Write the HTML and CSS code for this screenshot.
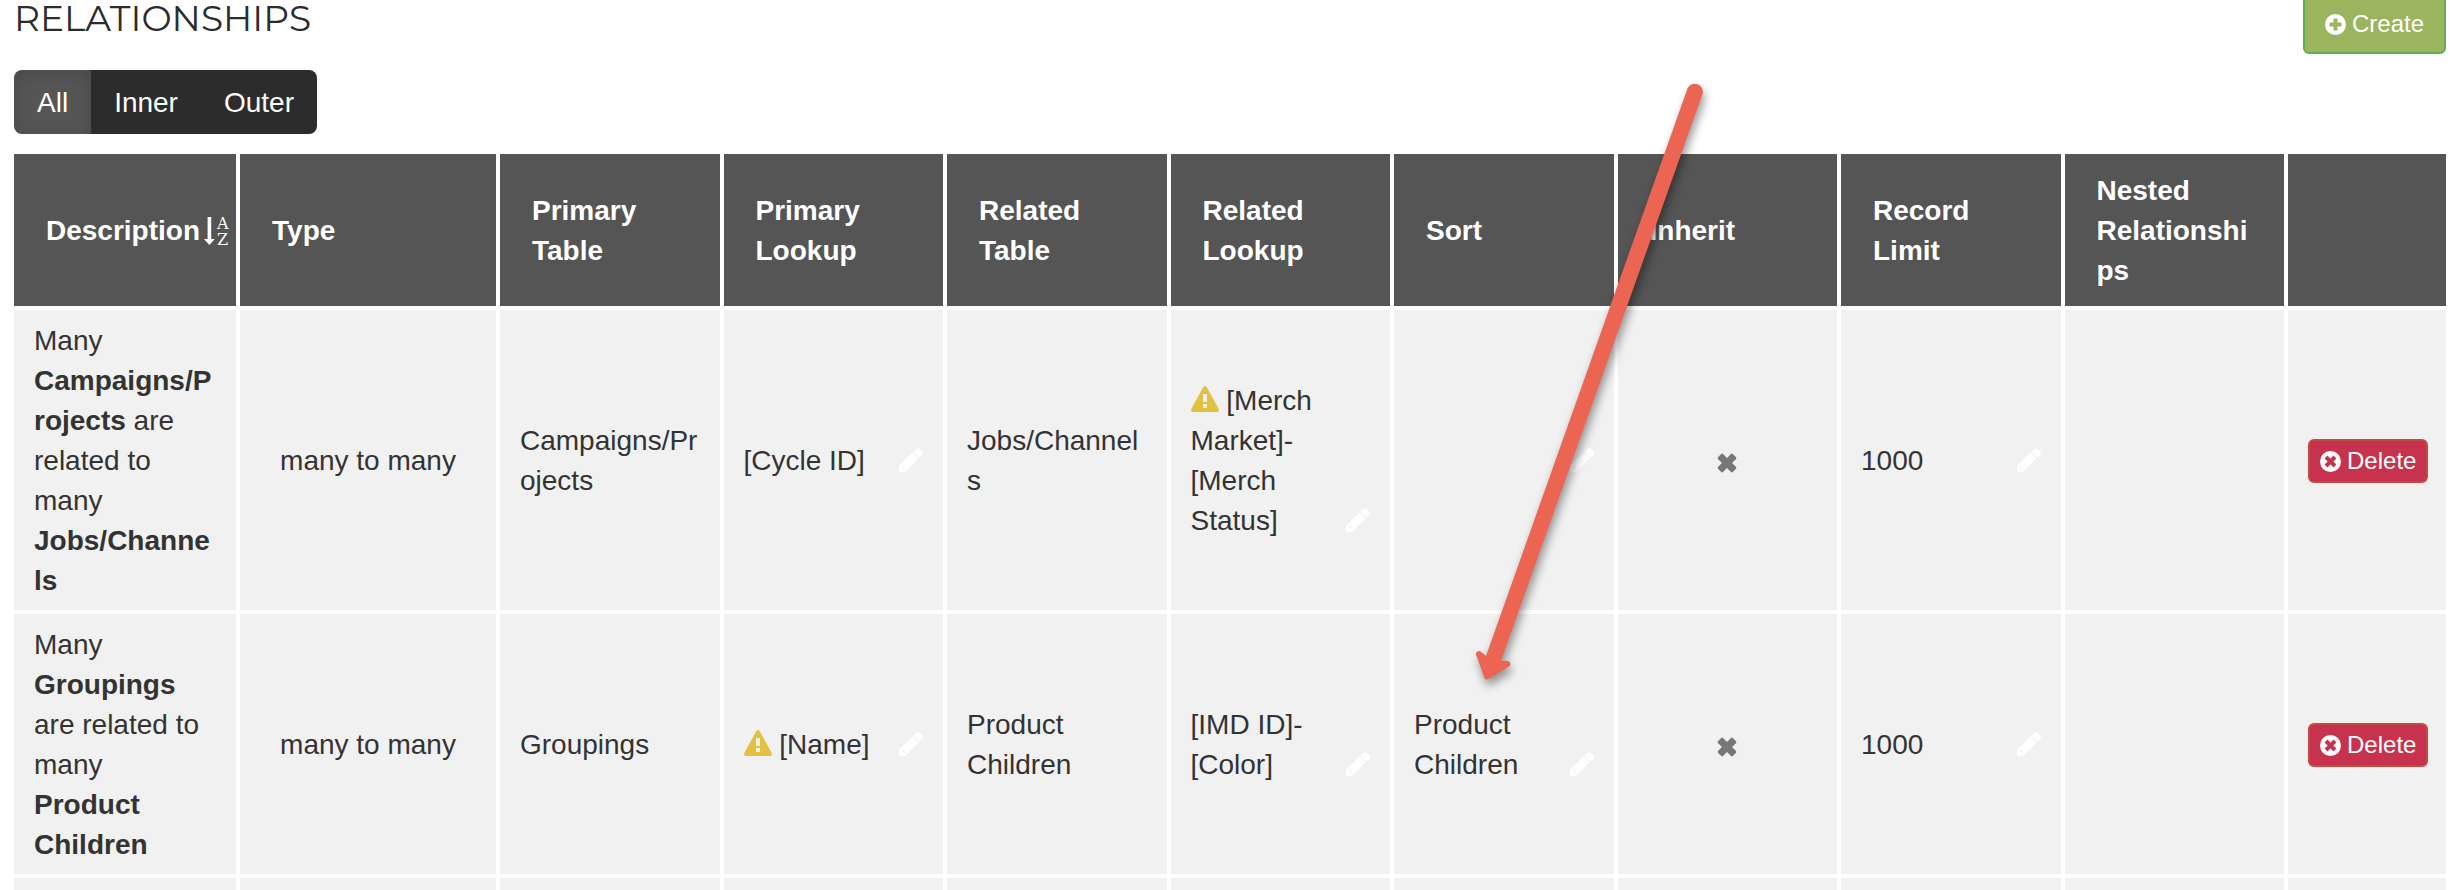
FILE: index.html
```
<!DOCTYPE html>
<html lang="en">
<head>
    <meta charset="UTF-8">
    <meta name="viewport" content="width=device-width, initial-scale=1.0">
    <title>Relationships</title>
    <link rel="stylesheet" href="styles.css">
</head>
<body>

<!-- shared icons -->
<svg class="icon-defs" aria-hidden="true">
    <symbol id="pencil" viewBox="0 0 24 24">
        <path d="M13.6 4.6 L19.4 10.4 L7.6 22.6 Q6.400 24 5 24 H0 V18.500 Q0 17.600 0.800 16.800 Z M14.300 3.900 L17 1.200 Q18.900 -0.800 20.800 1 L23.100 3.300 Q24.800 5.200 23.100 7 L20.200 9.700 Z"/>
        <path class="pencil-tip" d="M3.400 17.600 L6.600 20.600 L5.800 21.200 L2.800 18.400 Z"/>
    </symbol>
    <symbol id="warning" viewBox="0 0 28 26">
        <path fill-rule="evenodd" d="M12.300 1 Q14 -1 15.700 1 L27.700 23 Q28.600 25.800 26 26 H2 Q-0.600 25.800 0.300 23 Z M12 8 V16 H16 V8 Z M12 18 V22 H16 V18 Z"/>
    </symbol>
    <symbol id="cross" viewBox="0 0 20 20">
        <g transform="rotate(45 10 10)">
            <rect x="-0.500" y="6.400" width="21" height="7.200" rx="1.600"/>
            <rect x="6.400" y="-0.500" width="7.200" height="21" rx="1.600"/>
        </g>
    </symbol>
</svg>

<div class="page">
    <div class="header">
        <h1>RELATIONSHIPS</h1>
        <button type="button" class="btn btn-create">
            <svg class="btn-icon" viewBox="0 0 21 21" aria-hidden="true">
                <circle cx="10.5" cy="10.5" r="10.500"/>
                <path class="btn-mark" d="M10.500 4.500 V16.500 M4.500 10.500 H16.500"/>
            </svg>
            Create
        </button>
    </div>

    <div class="tabs">
        <button type="button" class="tab active">All</button><button type="button" class="tab">Inner</button><button type="button" class="tab">Outer</button>
    </div>

    <table class="grid">
        <colgroup>
            <col class="col-description">
            <col class="col-type">
            <col span="8">
            <col class="col-actions">
        </colgroup>
        <thead>
            <tr>
                <th class="sorted">
                    <div class="sort-label">
                        Description
                        <svg class="sort-icon" viewBox="0 0 25 28" aria-hidden="true">
                            <path d="M3.600 0 H7.200 V22 H10.800 L5.400 28 L0 22 H3.600 Z"/>
                            <text x="13" y="12">A</text>
                            <text x="13" y="28">Z</text>
                        </svg>
                    </div>
                </th>
                <th>Type</th>
                <th>Primary Table</th>
                <th>Primary Lookup</th>
                <th>Related Table</th>
                <th>Related Lookup</th>
                <th class="marked">
                    Sort
                    <svg class="arrow" viewBox="0 0 250 620" aria-hidden="true">
                        <path d="M217.500 8.500 A8 8 0 0 1 232.500 14 L31 580.700 L37.500 581 A3 3 0 0 1 39 586.500 L18.500 599 Q16 600.500 14.500 598 L6 574.500 A3 3 0 0 1 10.500 571.500 L16 576 Z"/>
                    </svg>
                </th>
                <th>Inherit</th>
                <th>Record Limit</th>
                <th>Nested Relationships</th>
                <th></th>
            </tr>
        </thead>
        <tbody>
            <tr>
                <td>Many <strong>Campaigns/Projects</strong> are related to many <strong>Jobs/Channels</strong></td>
                <td class="center">many to many</td>
                <td>Campaigns/Projects</td>
                <td><div class="editable"><span>[Cycle ID]</span><svg class="pencil"><use href="#pencil"/></svg></div></td>
                <td>Jobs/Channels</td>
                <td><div class="editable"><span><svg class="warning"><use href="#warning"/></svg> [Merch Market]-[Merch Status]</span><svg class="pencil"><use href="#pencil"/></svg></div></td>
                <td><div class="editable"><span></span><svg class="pencil"><use href="#pencil"/></svg></div></td>
                <td class="center"><svg class="cross"><use href="#cross"/></svg></td>
                <td><div class="editable"><span>1000</span><svg class="pencil"><use href="#pencil"/></svg></div></td>
                <td></td>
                <td>
                    <button type="button" class="btn btn-delete">
                        <svg class="btn-icon" viewBox="0 0 21 21" aria-hidden="true">
                            <circle cx="10.5" cy="10.5" r="10.500"/>
                            <path class="btn-mark" d="M6 6 L15 15 M15 6 L6 15"/>
                        </svg>
                        Delete
                    </button>
                </td>
            </tr>
            <tr>
                <td>Many <strong>Groupings</strong> are related to many <strong>Product Children</strong></td>
                <td class="center">many to many</td>
                <td>Groupings</td>
                <td><div class="editable"><span><svg class="warning"><use href="#warning"/></svg> [Name]</span><svg class="pencil"><use href="#pencil"/></svg></div></td>
                <td>Product Children</td>
                <td><div class="editable"><span>[IMD ID]-[Color]</span><svg class="pencil"><use href="#pencil"/></svg></div></td>
                <td><div class="editable"><span>Product Children</span><svg class="pencil"><use href="#pencil"/></svg></div></td>
                <td class="center"><svg class="cross"><use href="#cross"/></svg></td>
                <td><div class="editable"><span>1000</span><svg class="pencil"><use href="#pencil"/></svg></div></td>
                <td></td>
                <td>
                    <button type="button" class="btn btn-delete">
                        <svg class="btn-icon" viewBox="0 0 21 21" aria-hidden="true">
                            <circle cx="10.5" cy="10.5" r="10.500"/>
                            <path class="btn-mark" d="M6 6 L15 15 M15 6 L6 15"/>
                        </svg>
                        Delete
                    </button>
                </td>
            </tr>
            <tr>
                <td></td>
                <td></td>
                <td></td>
                <td></td>
                <td></td>
                <td></td>
                <td></td>
                <td></td>
                <td></td>
                <td></td>
                <td></td>
            </tr>
        </tbody>
    </table>
</div>

</body>
</html>
```
FILE: styles.css
```
* {
    box-sizing: border-box;
}
body {
    margin: 0;
    font-family: "Helvetica Neue", Helvetica, "Liberation Sans", Arial, sans-serif;
    font-size: 28px;
    line-height: 40px;
    color: #333;
    background-color: #fff;
}
.icon-defs {
    display: none;
}
.page {
    height: 100vh;
    overflow: hidden;
    padding: 0 12px 0 14px;
}
.header {
    display: flex;
    justify-content: space-between;
    align-items: flex-start;
    height: 70px;
}
h1 {
    margin: 0;
    font-family: Montserrat, Lato, sans-serif;
    font-size: 36px;
    font-weight: 400;
    line-height: 36px;
    color: #2c2c2c;
}

/* buttons */
.btn {
    display: flex;
    align-items: center;
    gap: 6px;
    font-family: inherit;
    font-size: 24px;
    line-height: 36px;
    color: #fff;
    border: 2px solid;
    border-radius: 6px;
}
.btn-create {
    margin-top: -6px;
    padding: 10px 20px;
    background-color: #9ab55d;
    border-color: #62ad52;
}
.btn-delete {
    padding: 2px 10px;
    background-color: #c7324e;
    border-color: #c64b3f;
}
.btn-icon {
    width: 21px;
    height: 21px;
    fill: #fff;
}
.btn-mark {
    stroke-width: 4;
}
.btn-create .btn-mark {
    stroke: #9ab55d;
}
.btn-delete .btn-mark {
    stroke: #c7324e;
}

/* filter tabs */
.tabs {
    display: flex;
    width: fit-content;
    margin-bottom: 20px;
    border-radius: 8px;
    overflow: hidden;
}
.tab {
    padding: 13px 23px 11px;
    font-family: inherit;
    font-size: 28px;
    line-height: 40px;
    color: #fff;
    background-color: #2c2c2c;
    border: none;
}
.tab.active {
    background-color: #555;
    box-shadow: inset 0 4px 16px rgba(0, 0, 0, 0.15);
}

/* table */
.grid {
    width: 100%;
    table-layout: fixed;
    border-collapse: separate;
    border-spacing: 0;
}
.col-description {
    width: 9.13%;
}
.col-type {
    width: 10.69%;
}
.col-actions {
    width: 6.66%;
}
th, td {
    border-left: 4px solid #fff;
    border-bottom: 4px solid #fff;
    text-align: left;
    vertical-align: middle;
    overflow-wrap: break-word;
}
th:first-child, td:first-child {
    border-left: none;
}
th {
    padding: 17px 32px 15px;
    font-weight: bold;
    color: #fff;
    background-color: #555;
}
td {
    padding: 11px 20px 9px;
    background-color: #f1f1f1;
}
td:first-child {
    padding-right: 22px;
}
th.sorted {
    padding-right: 6px;
}
.sort-label {
    display: flex;
    align-items: center;
    gap: 4px;
}
.sort-icon {
    flex: none;
    width: 25px;
    height: 28px;
    overflow: visible;
    fill: #fff;
    font-family: "DejaVu Serif", serif;
    font-size: 16px;
    font-weight: 400;
}
.center {
    text-align: center;
}
.editable {
    display: flex;
    align-items: flex-end;
}
.editable span {
    flex: 1;
    min-width: 0;
}
.pencil {
    flex: none;
    width: 24px;
    height: 24px;
    margin: 7px 0 9px;
    fill: #fff;
}
.pencil-tip {
    fill: #f1f1f1;
}
.warning {
    width: 28px;
    height: 26px;
    vertical-align: -2px;
    fill: #e2c141;
}
.cross {
    width: 20px;
    height: 20px;
    vertical-align: middle;
    fill: #777;
}

/* arrow pointing down at the sort value */
.marked {
    position: relative;
}
.arrow {
    position: absolute;
    z-index: 1;
    left: 76px;
    top: -74px;
    width: 250px;
    height: 620px;
    overflow: visible;
    fill: #ec6552;
    filter: drop-shadow(2px 6px 5px rgba(0, 0, 0, 0.4));
}
```
